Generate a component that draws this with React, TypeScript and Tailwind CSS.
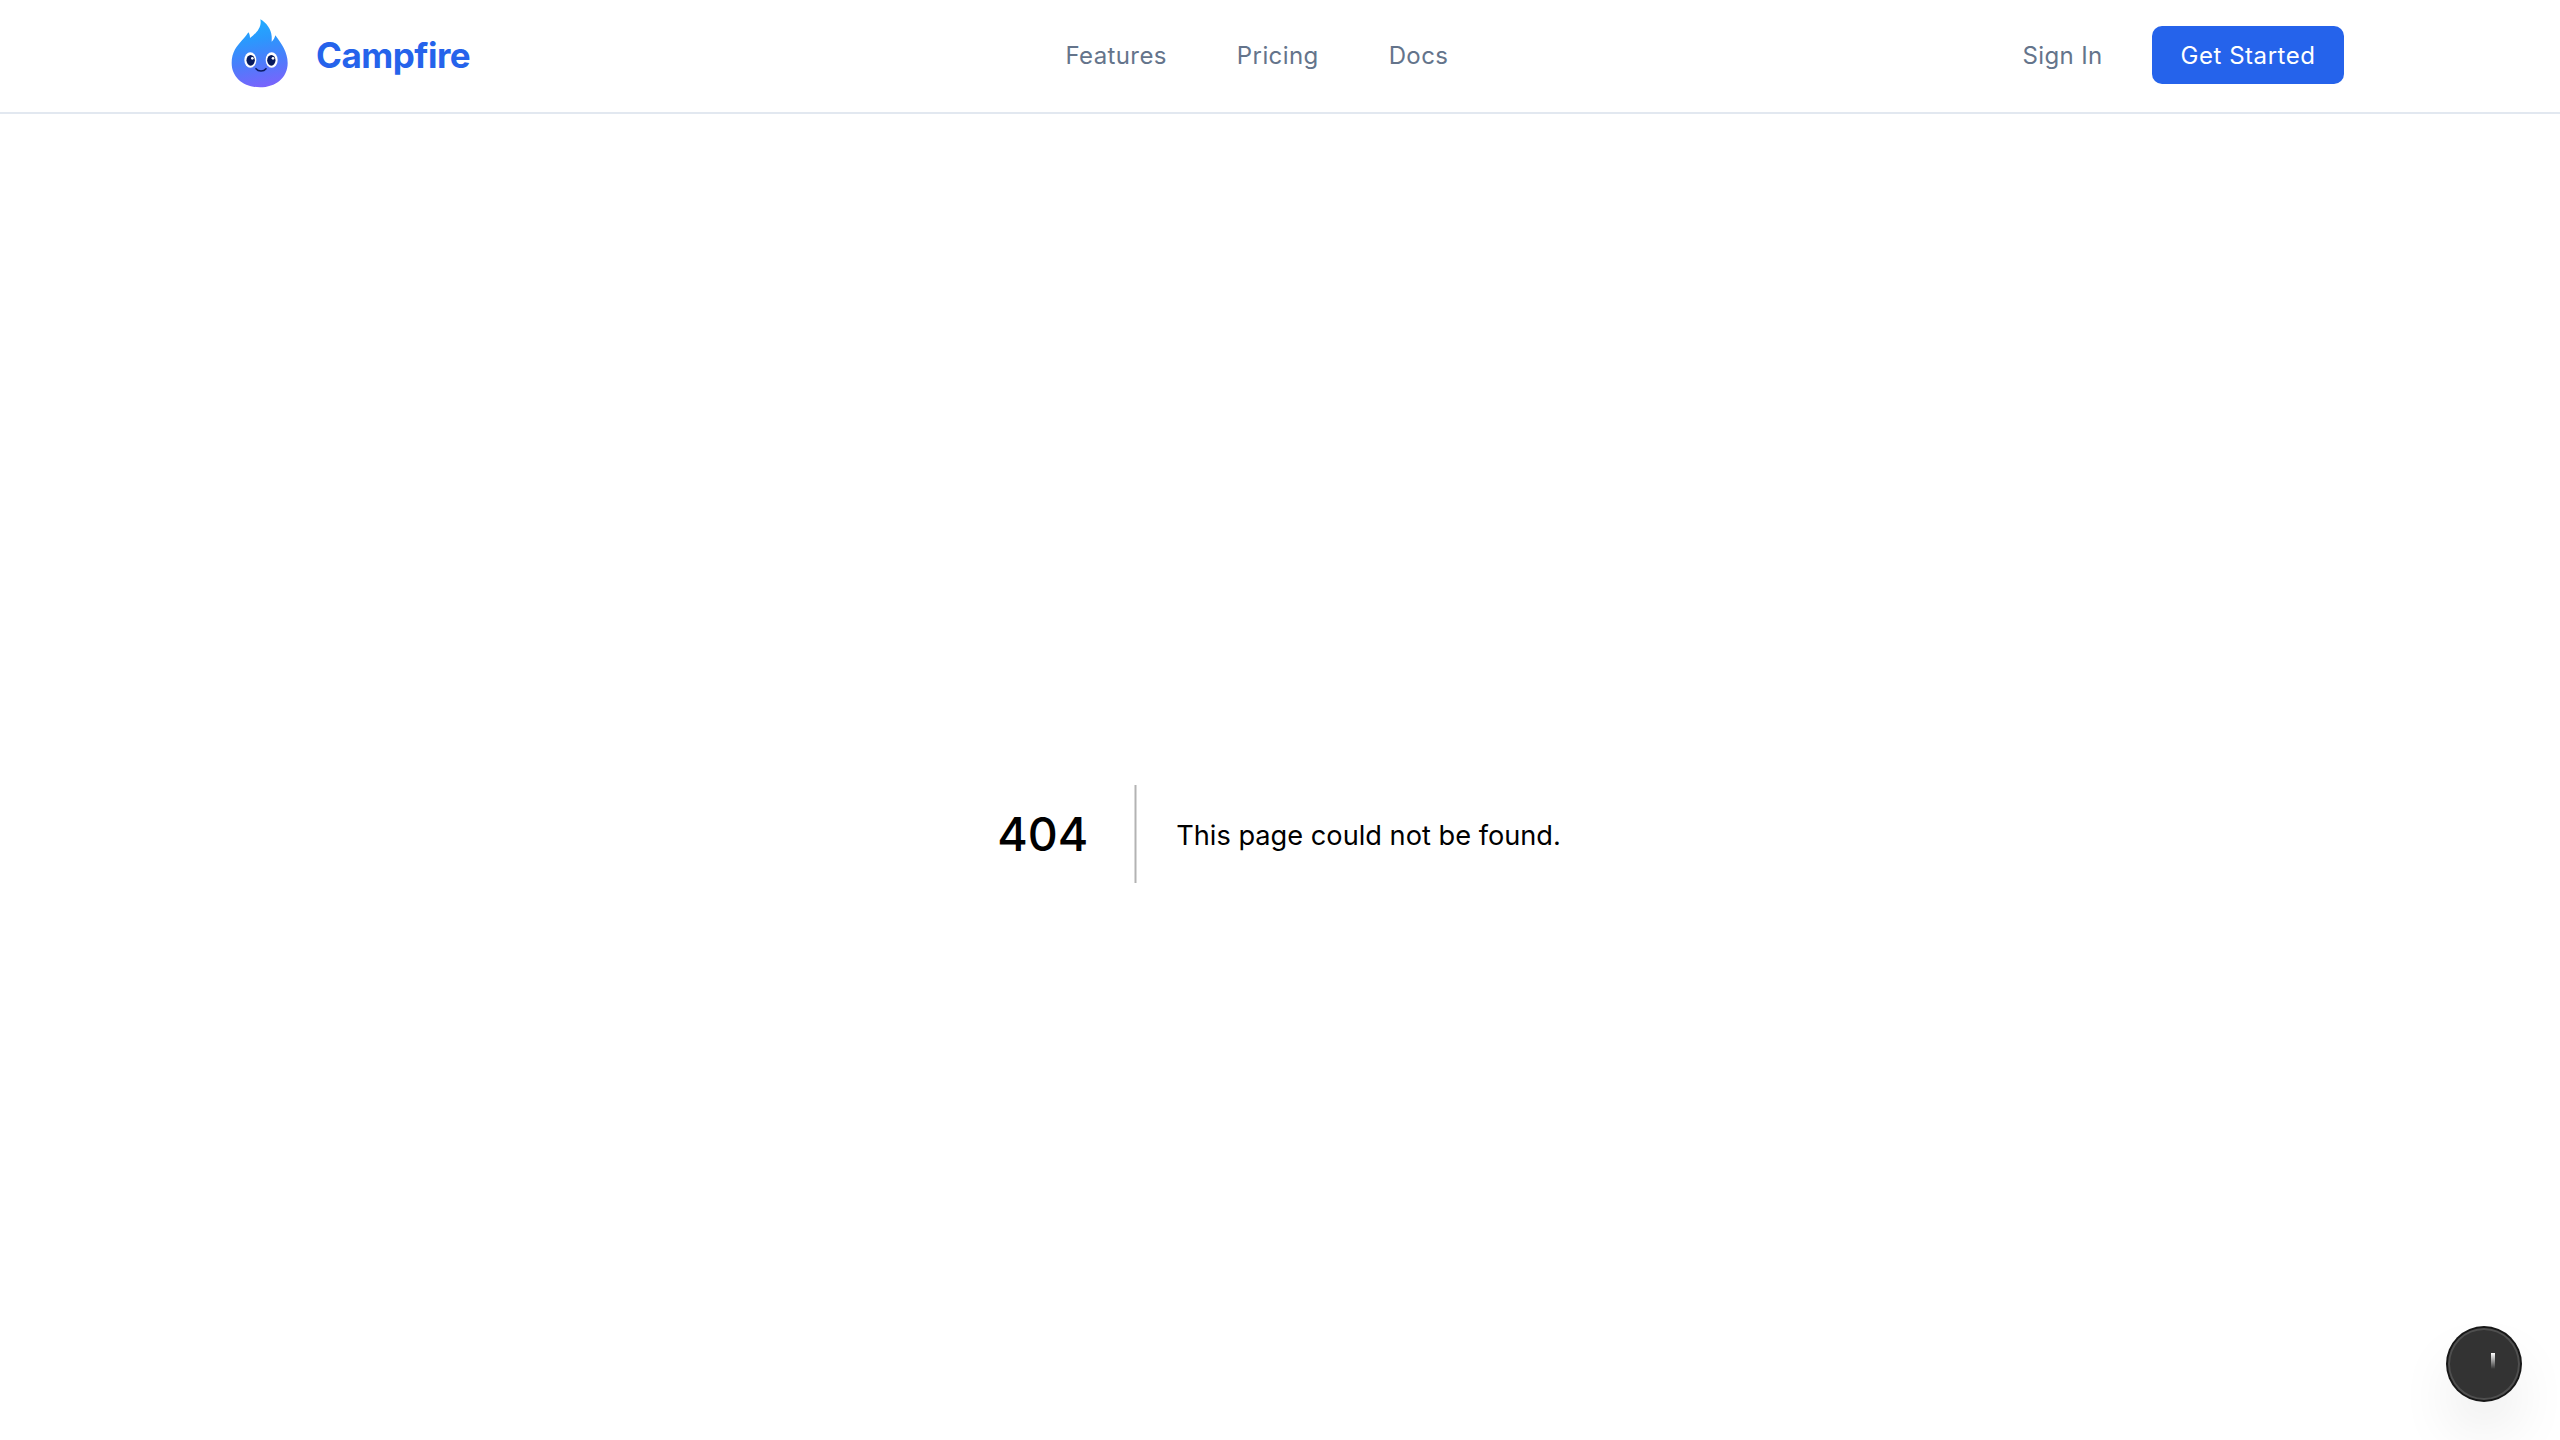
function FlameLogo() {
  return (
    <svg className="h-[69px] w-[58px]" viewBox="0 0 174 207" fill="none" aria-hidden="true">
      <defs>
        <linearGradient id="flame" x1="70" y1="0" x2="110" y2="205" gradientUnits="userSpaceOnUse">
          <stop offset="0" stopColor="#1faeff" />
          <stop offset="0.3" stopColor="#2b98fd" />
          <stop offset="0.62" stopColor="#4b7dfb" />
          <stop offset="1" stopColor="#7b63fc" />
        </linearGradient>
      </defs>
      <path
        d="M91 1C108 10 124 30 125 52C125.500 59 125 64 125 68C131 64 134 56 136 49C155 74 173 101 173 132C173 176 137 205 90 205C43 205 5 177 5 132C5 99 21 81 36 64C44 55 50 49 55 40C59 45 60 51 60 57C76 45 97 25 91 1Z"
        fill="url(#flame)"
      />
      <ellipse cx="61" cy="123" rx="18" ry="23" fill="#fff" />
      <ellipse cx="125" cy="123" rx="18" ry="23" fill="#fff" />
      <ellipse cx="62" cy="124" rx="12.500" ry="16" fill="#071a5c" />
      <ellipse cx="124" cy="124" rx="12.500" ry="16" fill="#071a5c" />
      <circle cx="67" cy="118" r="4" fill="#fff" />
      <circle cx="129" cy="118" r="4" fill="#fff" />
      <path d="M78 149C85 158 101 158 108 149" stroke="#0b1a63" strokeWidth="4.500" strokeLinecap="round" />
    </svg>
  );
}

const links = ["Features", "Pricing", "Docs"];

export default function App() {
  return (
    <div className="relative flex h-[1440px] w-[2560px] flex-col overflow-hidden bg-white font-['Inter',sans-serif] text-black">
      <header className="flex h-[114px] shrink-0 items-center justify-between border-b-2 border-[#e2e8f0] pr-[216px] pb-[2px] pl-[230px]">
        <a className="flex items-center gap-[28px] text-[35px] leading-[56px] font-bold tracking-[-0.5px] text-[#2563eb]">
          <span className="pb-[4px]">
            <FlameLogo />
          </span>
          <span className="pb-[1px]">Campfire</span>
        </a>
        <nav className="ml-[21px] flex items-center gap-[70px] pt-[2px] text-[24px] font-[420] tracking-[0.4px] text-[#64748b]">
          {links.map((label) => (
            <a key={label}>{label}</a>
          ))}
        </nav>
        <div className="flex items-center gap-[49.5px] text-[24px] font-[420]">
          <a className="pt-[2px] tracking-[0.35px] text-[#64748b]">Sign In</a>
          <button className="h-[58px] w-[192px] rounded-[10px] bg-[#2563eb] pt-[2px] tracking-[0.55px] text-white">
            Get Started
          </button>
        </div>
      </header>
      <main className="flex h-[1326px] shrink-0 justify-center pt-[671px] pr-[2px]">
        <div className="flex h-[98px] items-center">
          <h1 className="pt-px text-[46.5px] font-[450]">404</h1>
          <div className="mr-[39px] ml-[46px] h-[98px] w-[3px] bg-[linear-gradient(to_right,#d9d9d9_1px,#b3b3b3_1px,#b3b3b3_2px,#d9d9d9_2px)]" />
          <h2 className="pt-[4px] text-[27.2px] leading-[56px] font-normal">This page could not be found.</h2>
        </div>
      </main>
      <button
        aria-label="Open tools"
        className="absolute top-[1328px] left-[2448px] size-[72px] rounded-full bg-[#333] shadow-[0_0_0_2px_#171717,inset_0_0_0_2px_rgba(255,255,255,0.14),0_32px_64px_-16px_rgba(0,0,0,0.24)]"
      >
        <span className="absolute top-[25px] left-[43px] h-[16px] w-[4px] bg-linear-to-b from-white to-white/0" />
      </button>
    </div>
  );
}
